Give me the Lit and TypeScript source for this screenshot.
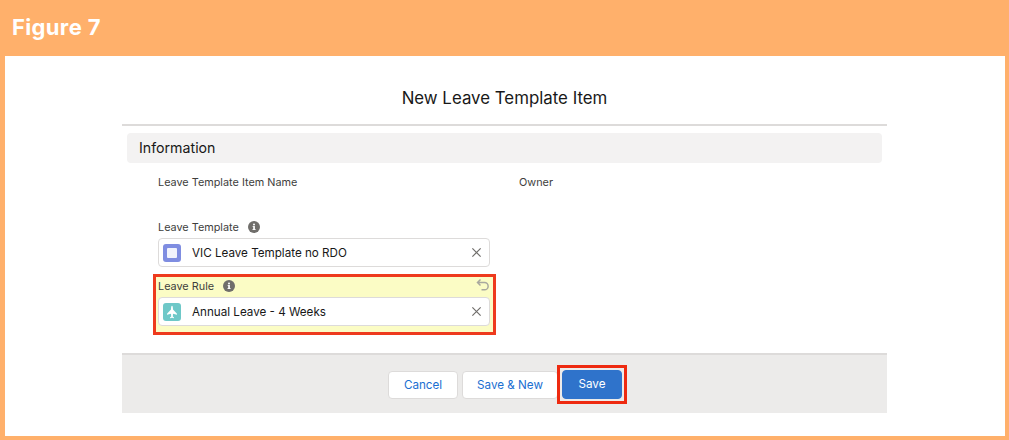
import { LitElement, html, css } from "lit";
import { customElement } from "lit/decorators.js";

const info = html`<svg class="info" viewBox="0 0 12 12"><circle cx="6" cy="6" r="6" fill="#706e6b"/><rect x="5.2" y="5.2" width="1.7" height="3.6" fill="#fff"/><rect x="4.5" y="8.1" width="3.1" height="0.9" fill="#fff"/><rect x="4.6" y="5.1" width="2" height="0.8" fill="#fff"/><circle cx="6" cy="3.5" r="1" fill="#fff"/></svg>`;
const close = html`<svg class="x" viewBox="0 0 12 12"><path d="M1.5 1.5 10.5 10.5M10.5 1.5 1.5 10.5" stroke="#706e6b" stroke-width="1.3" fill="none"/></svg>`;

@customElement("app-root")
export class AppRoot extends LitElement {
  static styles = css`
    :host { display: block; width: 1009px; height: 440px; background: #ffb06b; font-family: Inter, "Liberation Sans", sans-serif; color: #181818; overflow: hidden; }
    .frame { display: flex; flex-direction: column; height: 440px; box-sizing: border-box; padding: 0 4px 4px 5px; }
    .band { height: 56px; margin-left: -5px; padding: 14px 0 0 12px; box-sizing: border-box; font: 700 22px/26px Inter, sans-serif; letter-spacing: 0.35px; color: #fff; flex: none; }
    .page { flex: 1; background: #fff; padding: 0 118px 0 117px; }
    .title { height: 70px; box-sizing: border-box; border-bottom: 2px solid #dddbda; text-align: center; font-size: 16.85px; line-height: 85px; }
    .section { margin: 7px 5px 0; height: 30px; background: #f3f2f2; border-radius: 4px; padding-left: 12px; font-size: 14.2px; line-height: 30px; }
    .cols { display: flex; margin: 12px 0 0 36px; font-size: 10.85px; line-height: 14px; color: #3e3e3c; height: 45px; }
    .cols span { width: 361px; }
    .field { margin-left: 36px; width: 332px; }
    .label { display: flex; align-items: center; font-size: 10.85px; line-height: 14px; color: #3e3e3c; gap: 9px; height: 14px; }
    .info { width: 12px; height: 12px; flex: none; }
    .input { display: flex; align-items: center; height: 29px; box-sizing: border-box; margin-top: 4px; border: 1px solid #dddbda; border-radius: 4px; background: #fff; padding: 0 7.5px 0 4px; font-size: 11.65px; }
    .icon { width: 18px; height: 18px; border-radius: 3px; flex: none; margin-right: 11px; display: flex; align-items: center; justify-content: center; }
    .tpl { background: #7f8de1; }
    .tpl i { display: block; width: 10px; height: 10px; background: #f1f3fc; border-radius: 1px; }
    .rule { background: #6ec8c8; }
    .icon svg { width: 14px; height: 14px; }
    .text { flex: 1; }
    .x { width: 11px; height: 11px; flex: none; }
    .hl { position: relative; margin: 7px 0 0 31px; width: 343px; height: 61px; box-sizing: border-box; border: 3px solid #ee3a1d; background: #fbfcc5; padding: 1px 3px 0 2px; }
    .hl .label { height: 16px; }
    .hl .input { margin-top: 3px; }
    .undo { position: absolute; right: 3px; top: 1px; width: 14px; height: 14px; }
    .foot { margin-top: 18px; height: 60px; box-sizing: border-box; border-top: 2px solid #dddbda; background: #ecebea; display: flex; justify-content: flex-end; align-items: center; padding: 1px 260px 0 0; gap: 4px; }
    .btn { height: 28px; box-sizing: border-box; border: 1px solid #dddbda; background: #fff; border-radius: 4px; color: #1b6fd1; font-size: 11.65px; line-height: 26px; text-align: center; }
    .cancel { width: 70px; }
    .new { width: 96px; }
    .wrap { border: 3px solid #ee2a10; padding: 2px; margin-left: -5px; flex: none; position: relative; }
    .save { display: block; width: 60px; height: 29px; background: #2f73cb; border-color: #2f73cb; color: #fff; line-height: 27px; }
  `;

  render() {
    return html`<div class="frame">
      <div class="band">Figure 7</div>
      <div class="page">
        <div class="title">New Leave Template Item</div>
        <div class="section">Information</div>
        <div class="cols"><span>Leave Template Item Name</span><span>Owner</span></div>
        <div class="field">
          <div class="label">Leave Template ${info}</div>
          <div class="input">
            <div class="icon tpl"><i></i></div>
            <div class="text">VIC Leave Template no RDO</div>
            ${close}
          </div>
        </div>
        <div class="hl">
          <div class="label">Leave Rule ${info}</div>
          <svg class="undo" viewBox="0 0 14 14"><path d="M4.5 1.5 1.5 4.5 4.5 7.5M2 4.5H8.5A3.6 3.6 0 0 1 8.5 11.8H5.5" fill="none" stroke="#a9a89f" stroke-width="1.5"/></svg>
          <div class="input">
            <div class="icon rule"><svg viewBox="0 0 14 14"><path d="M7 0.8C7.7 0.8 8 2.4 8 4.6L12 8.8V9.8L8 8.8 7.8 11.4 9 12.4V13.2L7 12.8 5 13.2V12.4L6.2 11.4 6 8.8 2 9.8V8.8L6 4.6C6 2.4 6.3 0.8 7 0.8Z" fill="#fff"/></svg></div>
            <div class="text">Annual Leave - 4 Weeks</div>
            ${close}
          </div>
        </div>
        <div class="foot">
          <div class="btn cancel">Cancel</div>
          <div class="btn new">Save &amp; New</div>
          <div class="wrap"><div class="btn save">Save</div></div>
        </div>
      </div>
    </div>`;
  }
}
